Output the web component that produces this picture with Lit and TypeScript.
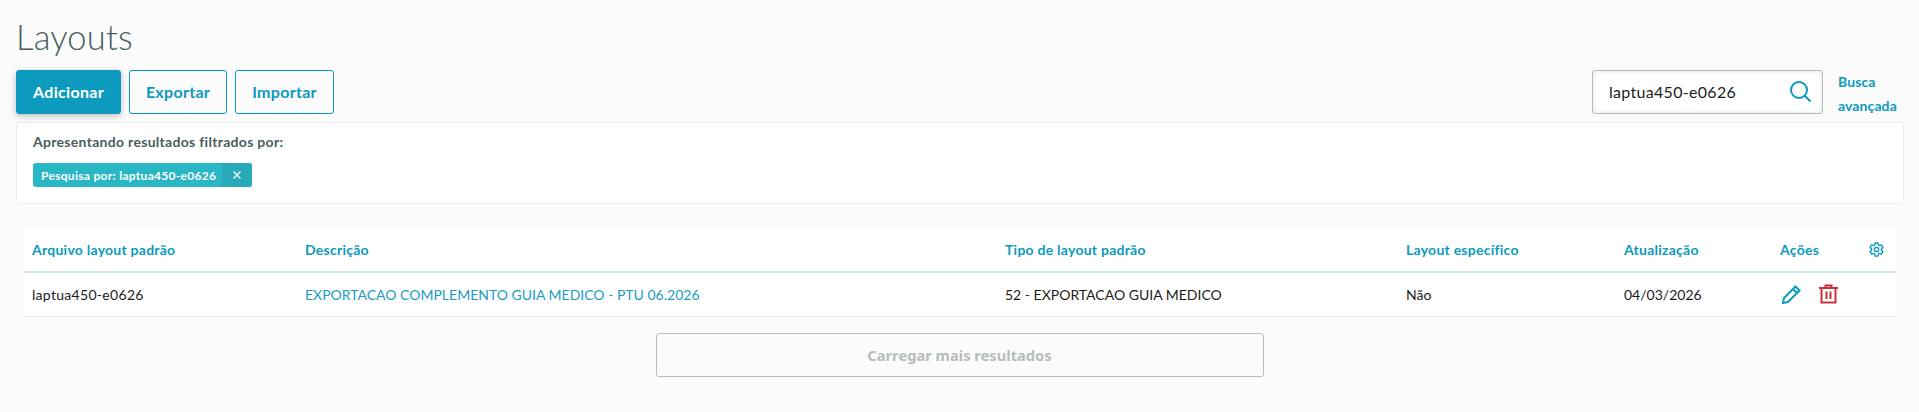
import { LitElement, html, css } from "lit";
import { customElement } from "lit/decorators.js";

@customElement("app-root")
export class AppRoot extends LitElement {
  static styles = css`
    :host { display: block; width: 1919px; height: 412px; background: #fbfbfb; font-family: "Lato", "Open Sans", sans-serif; color: #1c1c1c; overflow: hidden; }
    .page { padding: 0 16px; box-sizing: border-box; }
    h1 { margin: 0; padding-top: 16px; height: 70px; box-sizing: border-box; font-size: 34.500px; line-height: 42px; font-weight: 300; color: #4a5c60; letter-spacing: .2px; }
    .bar { display: flex; height: 44px; align-items: flex-start; gap: 8px; }
    .btn { box-sizing: border-box; height: 44px; padding-bottom: 2px; border: 1px solid #0c9abe; border-radius: 3px; background: transparent; color: #0c9abe; font: 700 16px "Lato", sans-serif; letter-spacing: .3px; display: flex; align-items: center; justify-content: center; }
    .primary { width: 105px; background: #0c9abe; color: #fff; box-shadow: 0 2px 6px rgba(0,0,0,.25); }
    .w1 { width: 98px; } .w2 { width: 99px; }
    .search { margin-left: auto; box-sizing: border-box; width: 231px; height: 44px; border: 1px solid #b6bcbe; border-radius: 3px; background: #fff; box-shadow: inset 0 0 4px rgba(0,0,0,.12); display: flex; align-items: center; justify-content: space-between; padding: 0 11px 2px 16px; font-size: 16px; letter-spacing: .3px; }
    .adv { width: 65px; margin-left: 7px; font-size: 14px; font-weight: 700; line-height: 24px; color: #0c9abe; letter-spacing: .1px; }
    .panel { box-sizing: border-box; margin-top: 8px; width: 1888px; height: 82px; background: #fff; border: 1px solid #eceeee; border-radius: 3px; padding: 9px 16px; }
    .panel p { margin: 0; font-size: 14px; line-height: 20px; font-weight: 700; color: #4a5c60; letter-spacing: .3px; }
    .tag { display: inline-flex; margin-top: 11px; height: 24px; background: #29b6c5; border-radius: 3px; color: #fff; font-size: 12px; font-weight: 700; overflow: hidden; letter-spacing: .3px; }
    .tag span { display: flex; align-items: center; padding: 0 6px 0 8px; width: 175px; white-space: nowrap; box-sizing: content-box; }
    .tag b { width: 30px; background: #27a9b8; display: flex; align-items: center; justify-content: center; }
    .table { margin: 24px 0 0 8px; width: 1872px; background: #fff; }
    .row { display: grid; grid-template-columns: 273px 700px 401px 218px 156px 89px 35px; padding-left: 8px; box-sizing: border-box; align-items: center; }
    .head { height: 45px; border-bottom: 2px solid #cdeaf2; font-size: 14px; font-weight: 700; color: #0c9abe; letter-spacing: .25px; }
    .body { height: 44px; padding-bottom: 1px; border-bottom: 1px solid #eceeee; font-size: 14px; }
    .body .lc { letter-spacing: .3px; }
    .link { color: #1a9cc4; }
    .acts { display: flex; align-items: center; gap: 18px; padding-left: 2px; }
    svg { display: block; }
    .more { display: flex; justify-content: center; margin-top: 16px; }
    .load { box-sizing: border-box; width: 608px; height: 44px; border: 1px solid #b6bcbe; border-radius: 3px; display: flex; align-items: center; justify-content: center; font: 700 14.700px "Noto Sans", sans-serif; color: #b6bcbe; }
  `;

  render() {
    return html`<div class="page">
      <h1>Layouts</h1>
      <div class="bar">
        <div class="btn primary">Adicionar</div>
        <div class="btn w1">Exportar</div>
        <div class="btn w2">Importar</div>
        <div class="search">laptua450-e0626
          <svg width="21" height="21" viewBox="0 0 21 21" fill="none" stroke="#0c9abe" stroke-width="2"><circle cx="9" cy="9" r="8"/><path d="M14.500 14.500l6 6"/></svg>
        </div>
        <div class="adv">Busca avançada</div>
      </div>
      <div class="panel">
        <p>Apresentando resultados filtrados por:</p>
        <div class="tag"><span>Pesquisa por: laptua450-e0626</span><b>
          <svg width="8" height="8" viewBox="0 0 8 8" stroke="#fff" stroke-width="1.3"><path d="M.5.5l7 7M7.500.5l-7 7"/></svg></b></div>
      </div>
      <div class="table">
        <div class="row head">
          <div>Arquivo layout padrão</div><div>Descrição</div><div>Tipo de layout padrão</div><div>Layout específico</div><div>Atualização</div><div>Ações</div>
          <svg width="15" height="15" viewBox="0 0 24 24" fill="none" stroke="#0c9abe" stroke-width="2.200" stroke-linejoin="round"><circle cx="12" cy="12" r="3.500"/><path d="M9.800 1.500h4.400l.6 3 2.400 1.300 2.900-1 2.200 3.800-2.300 2v2.800l2.300 2-2.200 3.800-2.900-1-2.400 1.300-.6 3H9.800l-.6-3-2.400-1.300-2.900 1-2.200-3.800 2.300-2v-2.800l-2.300-2 2.200-3.800 2.900 1 2.400-1.300z"/></svg>
        </div>
        <div class="row body">
          <div class="lc">laptua450-e0626</div><div class="link">EXPORTACAO COMPLEMENTO GUIA MEDICO - PTU 06.2026</div><div>52 - EXPORTACAO GUIA MEDICO</div><div>Não</div><div>04/03/2026</div>
          <div class="acts">
            <svg width="19" height="19" viewBox="0 0 19 19" fill="none" stroke="#0c9abe" stroke-width="2"><path d="M1 18l1-5L13.500 1.500l4 4L6 17zM11 4l4 4"/></svg>
            <svg width="19" height="20" viewBox="0 0 19 20" fill="none" stroke="#c8323f" stroke-width="2"><path d="M0 4h19M6.500 4V1.500h6V4M2.500 4v14.500h14V4M7.500 7.500v7.500M11.500 7.500v7.500"/></svg>
          </div>
          <div></div>
        </div>
      </div>
      <div class="more"><div class="load">Carregar mais resultados</div></div>
    </div>`;
  }
}
